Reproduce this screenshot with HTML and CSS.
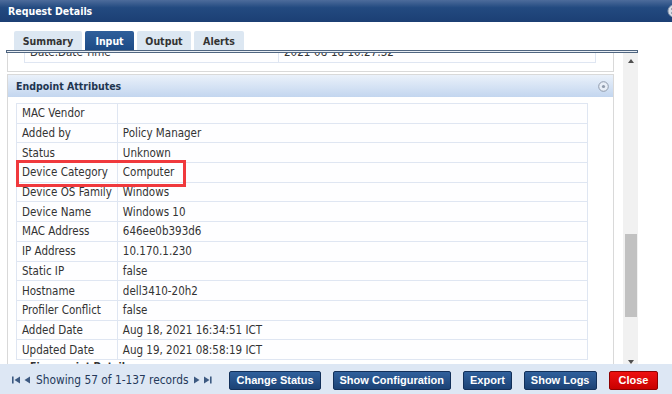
FILE: index.html
```html
<!DOCTYPE html>
<html lang="en">
<head>
    <meta charset="UTF-8">
    <title>Request Details</title>
    <link rel="stylesheet" href="styles.css">
</head>
<body>
    <div class="dialog">
        <div class="titlebar">
            <span class="title">Request Details</span>
            <svg class="title-close" width="14" height="14" viewBox="0 0 14 14">
                <circle cx="7" cy="7" r="6" fill="#d7dce4" stroke="#8e9bb0"/>
                <path d="M4.5 4.5l5 5M9.5 4.5l-5 5" stroke="#5b6b84" stroke-width="1.4"/>
            </svg>
        </div>

        <!-- Abas -->
        <div class="tabs">
            <span class="tab">Summary</span>
            <span class="tab active">Input</span>
            <span class="tab">Output</span>
            <span class="tab">Alerts</span>
        </div>
        <div class="tabline"></div>

        <div class="body">
            <div class="pane">
                <div class="pane-inner">
                    <div class="panel panel-prev">
                        <table class="attrs wide">
                            <tr><td>Date.Date-Time</td><td>2021-08-18 10:27:32</td></tr>
                        </table>
                    </div>

                    <div class="panel">
                        <div class="panel-head">
                            <span>Endpoint Attributes</span>
                            <svg width="11" height="11" viewBox="0 0 11 11">
                                <circle cx="5.5" cy="5.5" r="4.8" fill="#e8eef7" stroke="#8f9aab"/>
                                <circle cx="5.5" cy="5.5" r="1.6" fill="#8f9aab"/>
                            </svg>
                        </div>
                        <table class="attrs">
                            <tr><td>MAC Vendor</td><td></td></tr>
                            <tr><td>Added by</td><td>Policy Manager</td></tr>
                            <tr><td>Status</td><td>Unknown</td></tr>
                            <tr><td>Device Category</td><td>Computer</td></tr>
                            <tr><td>Device OS Family</td><td>Windows</td></tr>
                            <tr><td>Device Name</td><td>Windows 10</td></tr>
                            <tr><td>MAC Address</td><td>646ee0b393d6</td></tr>
                            <tr><td>IP Address</td><td>10.170.1.230</td></tr>
                            <tr><td>Static IP</td><td>false</td></tr>
                            <tr><td>Hostname</td><td>dell3410-20h2</td></tr>
                            <tr><td>Profiler Conflict</td><td>false</td></tr>
                            <tr><td>Added Date</td><td>Aug 18, 2021 16:34:51 ICT</td></tr>
                            <tr><td>Updated Date</td><td>Aug 19, 2021 08:58:19 ICT</td></tr>
                        </table>
                        <div class="sub-head">Fingerprint Details</div>
                        <div class="highlight"></div>
                    </div>
                </div>
            </div>

            <div class="scrollbar">
                <span class="arrow up"></span>
                <span class="thumb"></span>
                <span class="arrow down"></span>
            </div>
        </div>

        <!-- Rodapé -->
        <div class="footer">
            <div class="pager">
                <svg width="9" height="8" viewBox="0 0 9 8"><rect x="0" y="0.5" width="1.6" height="7" fill="#3d5a82"/><path d="M8 0.5v7L2.5 4z" fill="#3d5a82"/></svg>
                <svg width="7" height="8" viewBox="0 0 7 8"><path d="M6 0.5v7L0.5 4z" fill="#3d5a82"/></svg>
                <span class="pager-text">Showing 57 of 1-137 records</span>
                <svg width="7" height="8" viewBox="0 0 7 8"><path d="M1 0.5v7L6.5 4z" fill="#3d5a82"/></svg>
                <svg width="9" height="8" viewBox="0 0 9 8"><path d="M1 0.5v7L6.5 4z" fill="#3d5a82"/><rect x="7" y="0.5" width="1.6" height="7" fill="#3d5a82"/></svg>
            </div>
            <button class="btn">Change Status</button>
            <button class="btn">Show Configuration</button>
            <button class="btn">Export</button>
            <button class="btn">Show Logs</button>
            <button class="btn btn-red">Close</button>
        </div>
    </div>
</body>
</html>
```

FILE: styles.css
```css
/* Reset */
* {
    margin: 0;
    padding: 0;
    box-sizing: border-box;
}

body {
    font-family: "DejaVu Sans Condensed", "DejaVu Sans", sans-serif;
    font-size: 11.5px;
    color: #333;
    background-color: #fff;
    overflow: hidden;
}

.dialog {
    width: 672px;
    height: 394px;
    display: flex;
    flex-direction: column;
    overflow: hidden;
}

.titlebar {
    height: 22px;
    flex: none;
    display: flex;
    align-items: center;
    justify-content: space-between;
    padding-left: 8px;
    background: linear-gradient(#4d6c9b, #234a80 35%, #1c3f74);
    color: #fff;
}

.title {
    font-weight: bold;
    font-size: 10.5px;
}

.title-close {
    margin-right: -9px;
}

.tabs {
    flex: none;
    display: flex;
    gap: 3px;
    height: 28px;
    padding: 9px 0 0 14px;
}

.tab {
    display: flex;
    align-items: center;
    justify-content: center;
    height: 19px;
    background-color: #dce7f2;
    border-radius: 2px 2px 0 0;
    font-size: 10.5px;
    font-weight: bold;
    color: #333;
}

.tab:nth-child(1) { width: 68px; }
.tab:nth-child(2) { width: 49px; }
.tab:nth-child(3) { width: 54px; }
.tab:nth-child(4) { width: 50px; }

.tab.active {
    background: linear-gradient(#2f5f9b, #1d4b86);
    color: #fff;
}

.tabline {
    flex: none;
    height: 3px;
    margin-left: 6px;
    width: 632px;
    border: 1px solid #4f6580;
    background-color: #e9eef4;
    position: relative;
    z-index: 1;
}

.body {
    flex: 1;
    display: flex;
    min-height: 0;
}

.pane {
    width: 607px;
    margin-left: 7px;
    overflow: hidden;
}

/* posição atual da rolagem */
.pane-inner {
    margin-top: -12px;
}

.panel {
    position: relative;
    border: 1px solid #d9d9d9;
    border-top: none;
}

.panel-prev {
    padding: 0 24px 8px 8px;
    margin-bottom: 2px;
}

.panel-prev + .panel {
    border-top: 1px solid #d9d9d9;
}

.panel-head {
    height: 22px;
    display: flex;
    align-items: center;
    justify-content: space-between;
    padding: 0 4px 0 8px;
    background: linear-gradient(#eaf1fa, #c3d6ef);
    font-size: 10.5px;
    font-weight: bold;
    color: #1e3550;
}

.attrs {
    width: 572px;
    margin: 6px 0 0 8px;
    border-collapse: collapse;
    background-color: #fefeff;
}

.attrs td {
    height: 19.7px;
    padding: 0 5px;
    border: 1px solid #dfe6f2;
    white-space: nowrap;
}

.attrs td:first-child {
    width: 100px;
}

.attrs.wide {
    margin-top: 0;
}

.attrs.wide td {
    height: 21px;
}

.attrs.wide td:first-child {
    width: 254px;
}

.sub-head {
    padding: 0 0 0 22px;
    font-size: 10.5px;
    font-weight: bold;
    height: 40px;
}

.highlight {
    position: absolute;
    left: 8px;
    top: 85px;
    width: 170px;
    height: 27px;
    border: 3px solid #f0393d;
}

.scrollbar {
    width: 15px;
    margin-left: 9px;
    background-color: #f1f1f1;
    display: flex;
    flex-direction: column;
    align-items: center;
}

.arrow {
    width: 0;
    height: 0;
    border-left: 3.5px solid transparent;
    border-right: 3.5px solid transparent;
}

.arrow.up {
    margin-top: 6px;
    border-bottom: 4px solid #505050;
}

.arrow.down {
    margin-top: 43px;
    border-top: 4px solid #505050;
}

.thumb {
    width: 12px;
    height: 84px;
    margin-top: 171px;
    background-color: #c1c1c1;
}

.footer {
    flex: none;
    height: 30px;
    display: flex;
    align-items: center;
    padding: 2px 0 0 12px;
    background-color: #dde7f4;
}

.pager {
    flex: none;
    display: flex;
    align-items: center;
    gap: 3px;
    margin-right: 17px;
    color: #24395a;
}

.pager-text {
    font-size: 11.8px;
    margin: 0 2px;
    white-space: nowrap;
}

.btn {
    flex: none;
    height: 19px;
    padding: 0 6px;
    margin-right: 12px;
    font-family: "Liberation Sans", Arial, sans-serif;
    font-size: 11px;
    font-weight: bold;
    white-space: nowrap;
    color: #fff;
    background: linear-gradient(#30609c, #1b4275);
    border: 1px solid #12305a;
    border-radius: 2px;
}

.btn-red {
    padding: 0 9px;
    background: linear-gradient(#ee1111, #c80000);
    border-color: #8e0000;
}
```
